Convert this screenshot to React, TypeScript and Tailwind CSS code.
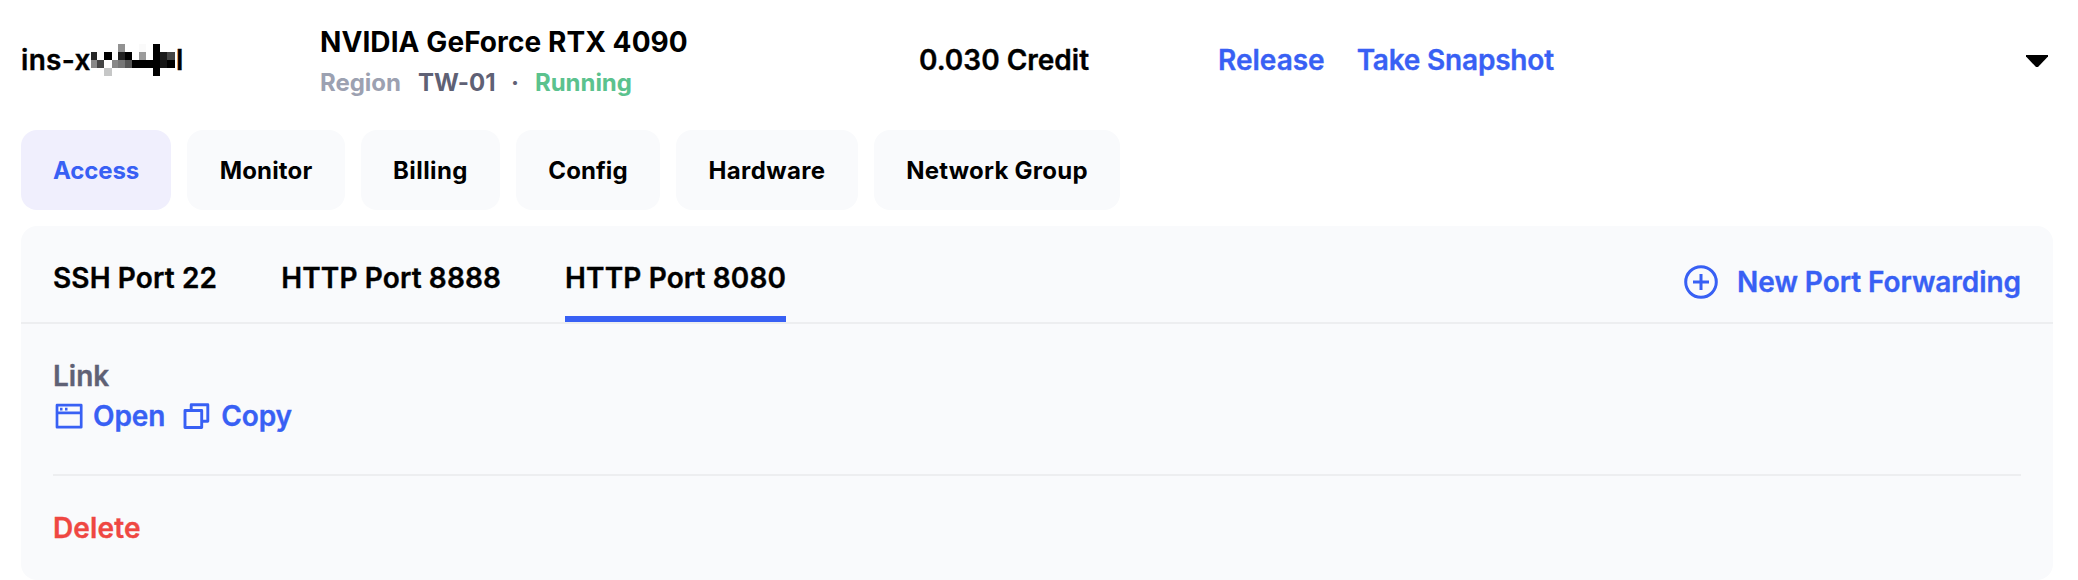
import React from "react";

const tabs = [
  { label: "Access", style: "w-[150px] bg-[#f0effd] text-[#3860f4] tracking-[-0.1px]" },
  { label: "Monitor", style: "w-[158px] bg-[#f9fafc] tracking-[0.15px]" },
  { label: "Billing", style: "w-[139px] bg-[#f9fafc] tracking-[0.4px]" },
  { label: "Config", style: "w-[144px] bg-[#f9fafc] tracking-[0.1px]" },
  { label: "Hardware", style: "w-[182px] bg-[#f9fafc] tracking-[0.4px]" },
  { label: "Network Group", style: "w-[246px] bg-[#f9fafc] tracking-[0.25px]" },
];
const ports = ["SSH Port 22", "HTTP Port 8888", "HTTP Port 8080"];

const mask: [number, number, number, number, string][] = [
  [0, 8, 6, 8, "#262626"], [0, 16, 6, 8, "#888888"], [6, 16, 7, 8, "#444444"],
  [13, 8, 8, 8, "#000000"], [13, 24, 8, 8, "#c6c7c7"], [21, 16, 6, 8, "#888888"],
  [27, 0, 7, 8, "#929292"], [27, 8, 7, 8, "#222222"], [27, 16, 7, 8, "#777777"],
  [34, 8, 7, 8, "#000000"], [34, 16, 7, 8, "#555555"], [41, 16, 21, 8, "#000000"],
  [48, 0, 7, 8, "#fafafa"], [48, 8, 7, 8, "#9b9b9b"], [62, 0, 7, 32, "#000000"],
  [69, 8, 7, 8, "#1a1a1a"], [76, 8, 8, 8, "#444444"], [69, 16, 7, 8, "#151515"], [76, 16, 8, 8, "#000000"],
];

function MaskedId() {
  return (
    <svg className="block h-8 w-[84px] shrink-0" viewBox="0 0 84 32" shapeRendering="crispEdges">
      {mask.map(([x, y, w, h, c], i) => (
        <rect key={i} x={x} y={y} width={w} height={h} fill={c} />
      ))}
    </svg>
  );
}

export default function App() {
  return (
    <div className="h-[580px] w-full bg-white pl-[21px] pr-[25px] font-['Inter',sans-serif] text-[28px] leading-10 font-semibold text-black [-webkit-text-stroke:0.35px]">
      <div className="flex h-[130px] items-start pt-[22px]">
        <div className="flex h-[76px] w-[299px] items-center">
          <span className="w-[70px] tracking-[0.3px]">ins-x</span>
          <MaskedId />
          <span className="ml-px">l</span>
        </div>
        <div className="w-[599px] whitespace-nowrap">
          <div className="font-bold tracking-[0.08px] [-webkit-text-stroke:0px]">NVIDIA GeForce RTX 4090</div>
          <div className="flex text-2xl leading-[42px] font-bold tracking-[-0.05px] [-webkit-text-stroke:0px]">
            <span className="w-[98px] text-[#9ca1b1]">Region</span>
            <span className="w-[93px] text-[#5f6175]">TW-01</span>
            <span className="w-[24px] text-[#5f6175]">·</span>
            <span className="text-[#5bc28e]">Running</span>
          </div>
        </div>
        <div className="flex h-[76px] w-[299px] items-center">0.030 Credit</div>
        <div className="flex h-[76px] grow items-center gap-8 text-[#3860f4]">
          <span>Release</span>
          <span className="tracking-[-0.2px]">Take Snapshot</span>
        </div>
        <svg className="mt-[33px] mr-[5px] h-3 w-[22px]" viewBox="0 0 22 12">
          <path d="M0 0H22V1.500L12 12H10L0 1.500Z" />
        </svg>
      </div>
      <div className="flex gap-4 text-2xl font-bold [-webkit-text-stroke:0px]">
        {tabs.map((t) => (
          <div key={t.label} className={`flex h-20 items-center justify-center rounded-2xl pt-[2px] whitespace-nowrap ${t.style}`}>
            {t.label}
          </div>
        ))}
      </div>
      <div className="mt-4 h-[354px] rounded-2xl bg-[#f9fafc]">
        <div className="flex h-[98px] justify-between border-b-2 border-[#edeef0] px-8">
          <div className="flex gap-16 tracking-[0.13px]">
            {ports.map((p, i) => (
              <div key={p} className={`h-24 pt-8 ${i === 2 ? "border-b-6 border-[#3860f4]" : ""}`}>
                {p}
              </div>
            ))}
          </div>
          <div className="mt-9 flex h-10 items-center gap-[19px] text-[#3860f4]">
            <svg className="h-[34px] w-[34px]" viewBox="0 0 34 34" fill="none" stroke="currentColor" strokeWidth="3">
              <circle cx="17" cy="17" r="15.300" />
              <path d="M17 9V25M9 17H25" />
            </svg>
            <span className="tracking-[-0.05px]">New Port Forwarding</span>
          </div>
        </div>
        <div className="mx-8 h-[152px] border-b-2 border-[#edeef0] pt-8">
          <div className="text-[#5f6175]">Link</div>
          <div className="flex items-center text-[#3860f4]">
            <svg className="ml-[2px] h-7 w-7" viewBox="0 0 28 28" fill="none" stroke="currentColor" strokeWidth="2.700">
              <rect x="2" y="3.200" width="24.200" height="22" strokeLinejoin="round" />
              <path d="M2 10.800H26M5 7.200H7.500M10 7.200H12.500" />
            </svg>
            <span className="ml-[10px] tracking-[-0.1px]">Open</span>
            <svg className="ml-[17px] h-7 w-7" viewBox="0 0 28 28" fill="none" stroke="currentColor" strokeWidth="2.900" strokeLinejoin="round">
              <rect x="3" y="8.500" width="16.700" height="17" />
              <path d="M9.200 8.500V2.700H25.800V19.200H19.700" />
            </svg>
            <span className="ml-[11px] tracking-[-0.15px]">Copy</span>
          </div>
        </div>
        <div className="mx-8 pt-8 tracking-[0.15px] text-[#ef4742]">Delete</div>
      </div>
    </div>
  );
}
